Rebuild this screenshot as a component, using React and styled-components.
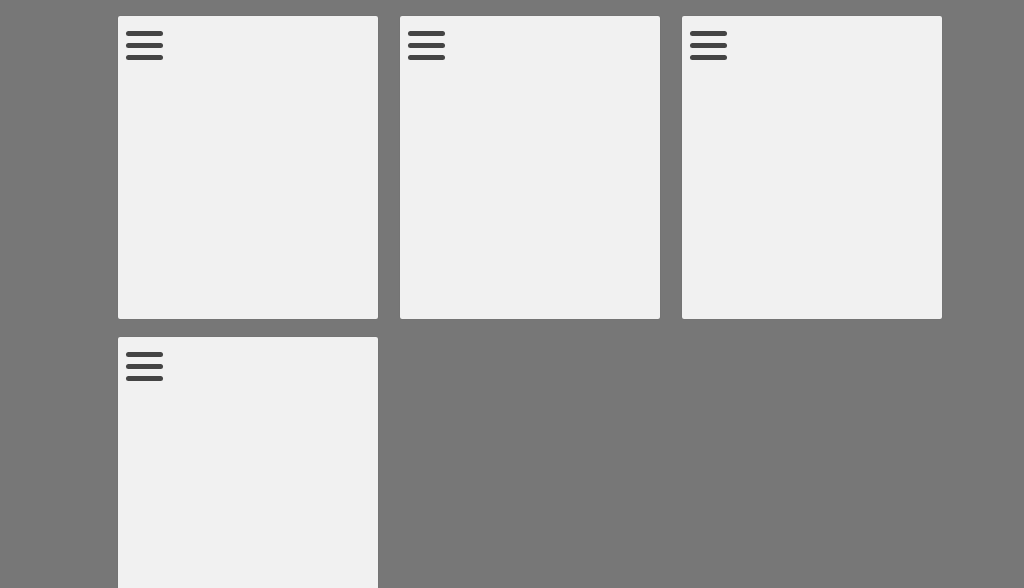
import React from 'react'
import styled, { createGlobalStyle } from 'styled-components'

const GlobalStyle = createGlobalStyle`
  html, body {
    margin: 0;
    padding: 0;
    background: #777777;
    font-family: "Liberation Sans", Arial, sans-serif;
  }
`

const Board = styled.div`
  display: grid;
  grid-template-columns: repeat(3, 260.4px);
  column-gap: 21.6px;
  row-gap: 18px;
  padding: 16px 0 0 118px;
`

const Card = styled.div`
  height: 303.4px;
  background: #f1f1f1;
  border-radius: 2px;
  box-shadow: 0 0 1px rgba(0, 0, 0, 0.25);
  padding: 14.8px 0 0 8.3px;
  box-sizing: border-box;
`

const Menu = styled.div`
  display: flex;
  flex-direction: column;
  width: 37px;
  gap: 6.6px;
  cursor: pointer;
`

const Bar = styled.div`
  flex: none;
  width: 36.6px;
  height: 5.3px;
  border-radius: 3px;
  background: #444444;
`

const cards = [1, 2, 3, 4]

function App() {
  return (
    <>
      <GlobalStyle />
      <Board>
        {cards.map(id => (
          <Card key={id}>
            <Menu role="button" aria-label="menu">
              <Bar />
              <Bar />
              <Bar />
            </Menu>
          </Card>
        ))}
      </Board>
    </>
  )
}

export default App
